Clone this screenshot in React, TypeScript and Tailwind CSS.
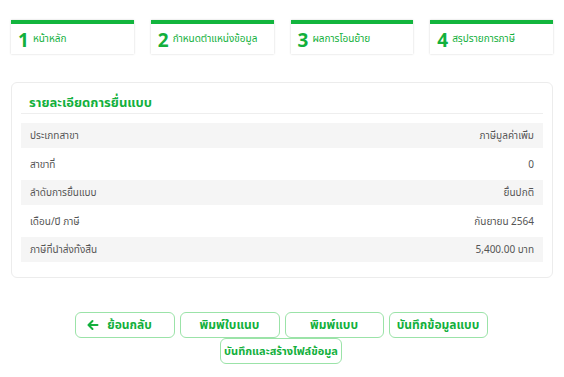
import React from 'react';

const steps = [
    { no: '1', label: 'หน้าหลัก' },
    { no: '2', label: 'กำหนดตำแหน่งข้อมูล' },
    { no: '3', label: 'ผลการโอนย้าย' },
    { no: '4', label: 'สรุปรายการภาษี' },
];

const rows = [
    { label: 'ประเภทสาขา', value: 'ภาษีมูลค่าเพิ่ม', shaded: true },
    { label: 'สาขาที่', value: '0', shaded: false },
    { label: 'ลำดับการยื่นแบบ', value: 'ยื่นปกติ', shaded: true },
    { label: 'เดือน/ปี ภาษี', value: 'กันยายน 2564', shaded: false },
    { label: 'ภาษีที่นำส่งทั้งสิ้น', value: '5,400.00 บาท', shaded: true },
];

const ArrowLeft = () => (
    <svg width="12" height="12" viewBox="0 0 12 12" fill="none" stroke="#12b03c" strokeWidth="2" strokeLinecap="round" strokeLinejoin="round">
        <path d="M10.5 6H1.8" />
        <path d="M5.5 2L1.5 6l4 4" />
    </svg>
);

const btn = 'shrink-0 h-[26px] rounded-[6px] border border-[#9be3a8] text-[#12b03c] font-bold bg-white whitespace-nowrap';

export default function App() {
    return (
        <div className="w-[564px] h-[377px] bg-white overflow-hidden" style={{ fontFamily: '"Noto Sans", "Noto Sans Thai", "DejaVu Sans", sans-serif' }}>
            {/* step tabs */}
            <div className="flex gap-[17px] px-[11px] pt-[20px]">
                {steps.map(s => (
                    <div key={s.no} className="flex-1 h-[34px] bg-white border-t-[4px] border-[#12b53d] shadow-[0_0_2px_rgba(0,0,0,0.18)] flex items-center pl-[7px] gap-[4px]">
                        <span className="text-[19px] font-bold leading-none text-[#12b03c] mt-[2px]">{s.no}</span>
                        <span className="text-[10px] leading-none text-[#12b03c] mt-[-2px]">{s.label}</span>
                    </div>
                ))}
            </div>

            {/* detail card */}
            <div className="mx-[11px] mt-[28px] h-[196px] rounded-[6px] border border-[#ececec] px-[9px] pt-[10px]">
                <div className="pl-[8px] h-[20px] text-[13px] font-bold leading-[19px] text-[#12b03c]">รายละเอียดการยื่นแบบ</div>
                <div className="border-b border-[#eeeeee]" />
                <div className="mt-[9px]">
                    {rows.map(r => (
                        <div
                            key={r.label}
                            className={`flex items-center justify-between px-[9px] text-[10px] text-[#555555] ${r.shaded ? 'h-[25px] bg-[#f5f5f5]' : 'h-[32px] bg-white'}`}
                        >
                            <span>{r.label}</span>
                            <span>{r.value}</span>
                        </div>
                    ))}
                </div>
            </div>

            {/* action buttons */}
            <div className="w-[516px] ml-[23px] mt-[34px] flex flex-wrap justify-center gap-x-[5px]">
                <button className={`${btn} text-[12px] w-[100px] flex items-center justify-center gap-[8px] pr-[10px]`}>
                    <ArrowLeft />
                    <span>ย้อนกลับ</span>
                </button>
                <button className={`${btn} text-[12px] w-[100px]`}>พิมพ์ใบแนบ</button>
                <button className={`${btn} text-[12px] w-[99px]`}>พิมพ์แบบ</button>
                <button className={`${btn} text-[12px] w-[99px]`}>บันทึกข้อมูลแบบ</button>
                <button className={`${btn} text-[11px] w-[122px]`}>บันทึกและสร้างไฟล์ข้อมูล</button>
            </div>
        </div>
    );
}
